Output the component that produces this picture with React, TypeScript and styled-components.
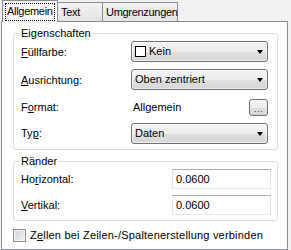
import React from "react";
import styled, { createGlobalStyle, css } from "styled-components";

const GlobalStyle = createGlobalStyle`
  html, body {
    margin: 0;
    padding: 0;
    background: #f0f0f0;
  }
  body {
    font-family: "Liberation Sans", Arial, sans-serif;
    font-size: 11px;
    color: #000;
  }
`;

const Dialog = styled.div`
  width: 291px;
  height: 250px;
  display: flex;
  flex-direction: column;
`;

const TabStrip = styled.div`
  display: flex;
  align-items: flex-end;
  height: 21px;
  padding-left: 3px;
  position: relative;
  z-index: 1;
`;

const Tab = styled.div<{ $active?: boolean; $width: number }>`
  box-sizing: border-box;
  width: ${({ $width }) => $width}px;
  height: 19px;
  margin-left: -1px;
  padding: 0 0 0 3px;
  display: flex;
  align-items: center;
  white-space: nowrap;
  letter-spacing: -0.3px;
  border: 1px solid #898c95;
  border-bottom: none;
  background: linear-gradient(#f3f3f3, #e3e3e3);

  ${({ $active }) =>
    $active &&
    css`
      height: 22px;
      margin-bottom: -1px;
      padding-left: 2px;
      background: #fff;
      position: relative;
      z-index: 1;
    `}
`;

const FocusLabel = styled.span`
  border: 1px dotted #000;
  padding: 1px 1px 2px 1px;
  line-height: 13px;
`;

const Panel = styled.div`
  box-sizing: border-box;
  margin-left: 1px;
  width: 287px;
  height: 229px;
  border: 1px solid #898c95;
  background: #fff;
  padding: 5px 9px 0 11px;
  display: flex;
  flex-direction: column;
`;

const Group = styled.fieldset<{ $top?: number }>`
  box-sizing: border-box;
  width: 265px;
  margin: ${({ $top }) => $top ?? 0}px 0 0 0;
  padding: 0 9px 5px 7px;
  min-width: 0;
  border: 1px solid #d5dfe5;
  border-radius: 3px;
`;

const Legend = styled.legend`
  padding: 0 1px;
  margin-left: -1px;
  line-height: 13px;
`;

const FieldGrid = styled.div<{ $cols: string; $rows: string }>`
  display: grid;
  grid-template-columns: ${({ $cols }) => $cols};
  grid-template-rows: ${({ $rows }) => $rows};
  row-gap: 6px;
  align-items: center;
  padding-top: 1px;
`;

const Label = styled.span`
  line-height: 13px;
  white-space: nowrap;
`;

const U = styled.span`
  text-decoration: underline;
`;

const Combo = styled.div`
  box-sizing: border-box;
  align-self: start;
  height: 21px;
  display: flex;
  align-items: center;
  gap: 3px;
  padding: 0 4px 0 3px;
  border: 1px solid #707070;
  border-radius: 3px;
  background: linear-gradient(#f4f4f4 0%, #ececec 50%, #e0e0e0 51%, #d6d6d6 100%);
  box-shadow: inset 0 0 0 1px rgba(255, 255, 255, 0.6);
`;

const ComboText = styled.span`
  flex: 1;
  line-height: 13px;
`;

const Arrow = styled.span`
  width: 0;
  height: 0;
  border-left: 3.5px solid transparent;
  border-right: 3.5px solid transparent;
  border-top: 4px solid #000;
`;

const Swatch = styled.span`
  box-sizing: border-box;
  width: 11px;
  height: 11px;
  border: 1px solid #000;
  background: #fff;
`;

const FormatRow = styled.div`
  display: flex;
  align-items: center;
  justify-content: space-between;
  padding-left: 2px;
`;

const SmallButton = styled.div`
  box-sizing: border-box;
  width: 19px;
  height: 17px;
  border: 1px solid #707070;
  border-radius: 3px;
  background: linear-gradient(#f4f4f4 0%, #ececec 50%, #e0e0e0 51%, #d6d6d6 100%);
  display: flex;
  align-items: flex-end;
  justify-content: center;
  font-size: 9px;
  line-height: 11px;
  letter-spacing: 0.5px;
  color: #333;
`;

const TextInput = styled.div`
  box-sizing: border-box;
  height: 20px;
  display: flex;
  align-items: center;
  padding-left: 3px;
  border: 1px solid #e3e9ef;
  border-top-color: #abadb3;
  border-left-color: #e2e3ea;
  border-right-color: #dbdfe6;
  background: #fff;
`;

const CheckRow = styled.label`
  display: flex;
  align-items: center;
  gap: 4px;
  margin-top: 8px;
  line-height: 13px;
  white-space: nowrap;
  letter-spacing: 0.2px;
`;

const CheckBox = styled.span`
  box-sizing: border-box;
  flex: none;
  width: 13px;
  height: 13px;
  border: 1px solid #8e8f8f;
  background: linear-gradient(135deg, #cfcfcf, #f6f6f6);
  box-shadow: inset 0 0 0 1px #f4f4f4;
`;

const App: React.FC = () => {
  return (
    <>
      <GlobalStyle />
      <Dialog>
        <TabStrip>
          <Tab $active $width={56}>
            <FocusLabel>Allgemein</FocusLabel>
          </Tab>
          <Tab $width={46}>Text</Tab>
          <Tab $width={76}>Umgrenzungen</Tab>
        </TabStrip>
        <Panel>
          <Group>
            <Legend>Eigenschaften</Legend>
            <FieldGrid $cols="110px 137px" $rows="22px 22px 20px 21px">
              <Label>
                <U>F</U>üllfarbe:
              </Label>
              <Combo>
                <Swatch />
                <ComboText>Kein</ComboText>
                <Arrow />
              </Combo>
              <Label>
                <U>A</U>usrichtung:
              </Label>
              <Combo>
                <ComboText>Oben zentriert</ComboText>
                <Arrow />
              </Combo>
              <Label>
                F<U>o</U>rmat:
              </Label>
              <FormatRow>
                <span>Allgemein</span>
                <SmallButton>...</SmallButton>
              </FormatRow>
              <Label>
                Ty<U>p</U>:
              </Label>
              <Combo>
                <ComboText>Daten</ComboText>
                <Arrow />
              </Combo>
            </FieldGrid>
          </Group>
          <Group $top={5}>
            <Legend>Ränder</Legend>
            <FieldGrid $cols="151px 99px" $rows="20px 20px">
              <Label>
                Ho<U>r</U>izontal:
              </Label>
              <TextInput>0.0600</TextInput>
              <Label>
                <U>V</U>ertikal:
              </Label>
              <TextInput>0.0600</TextInput>
            </FieldGrid>
          </Group>
          <CheckRow>
            <CheckBox />
            <span>
              Z<U>e</U>llen bei Zeilen-/Spaltenerstellung verbinden
            </span>
          </CheckRow>
        </Panel>
      </Dialog>
    </>
  );
};

export default App;
